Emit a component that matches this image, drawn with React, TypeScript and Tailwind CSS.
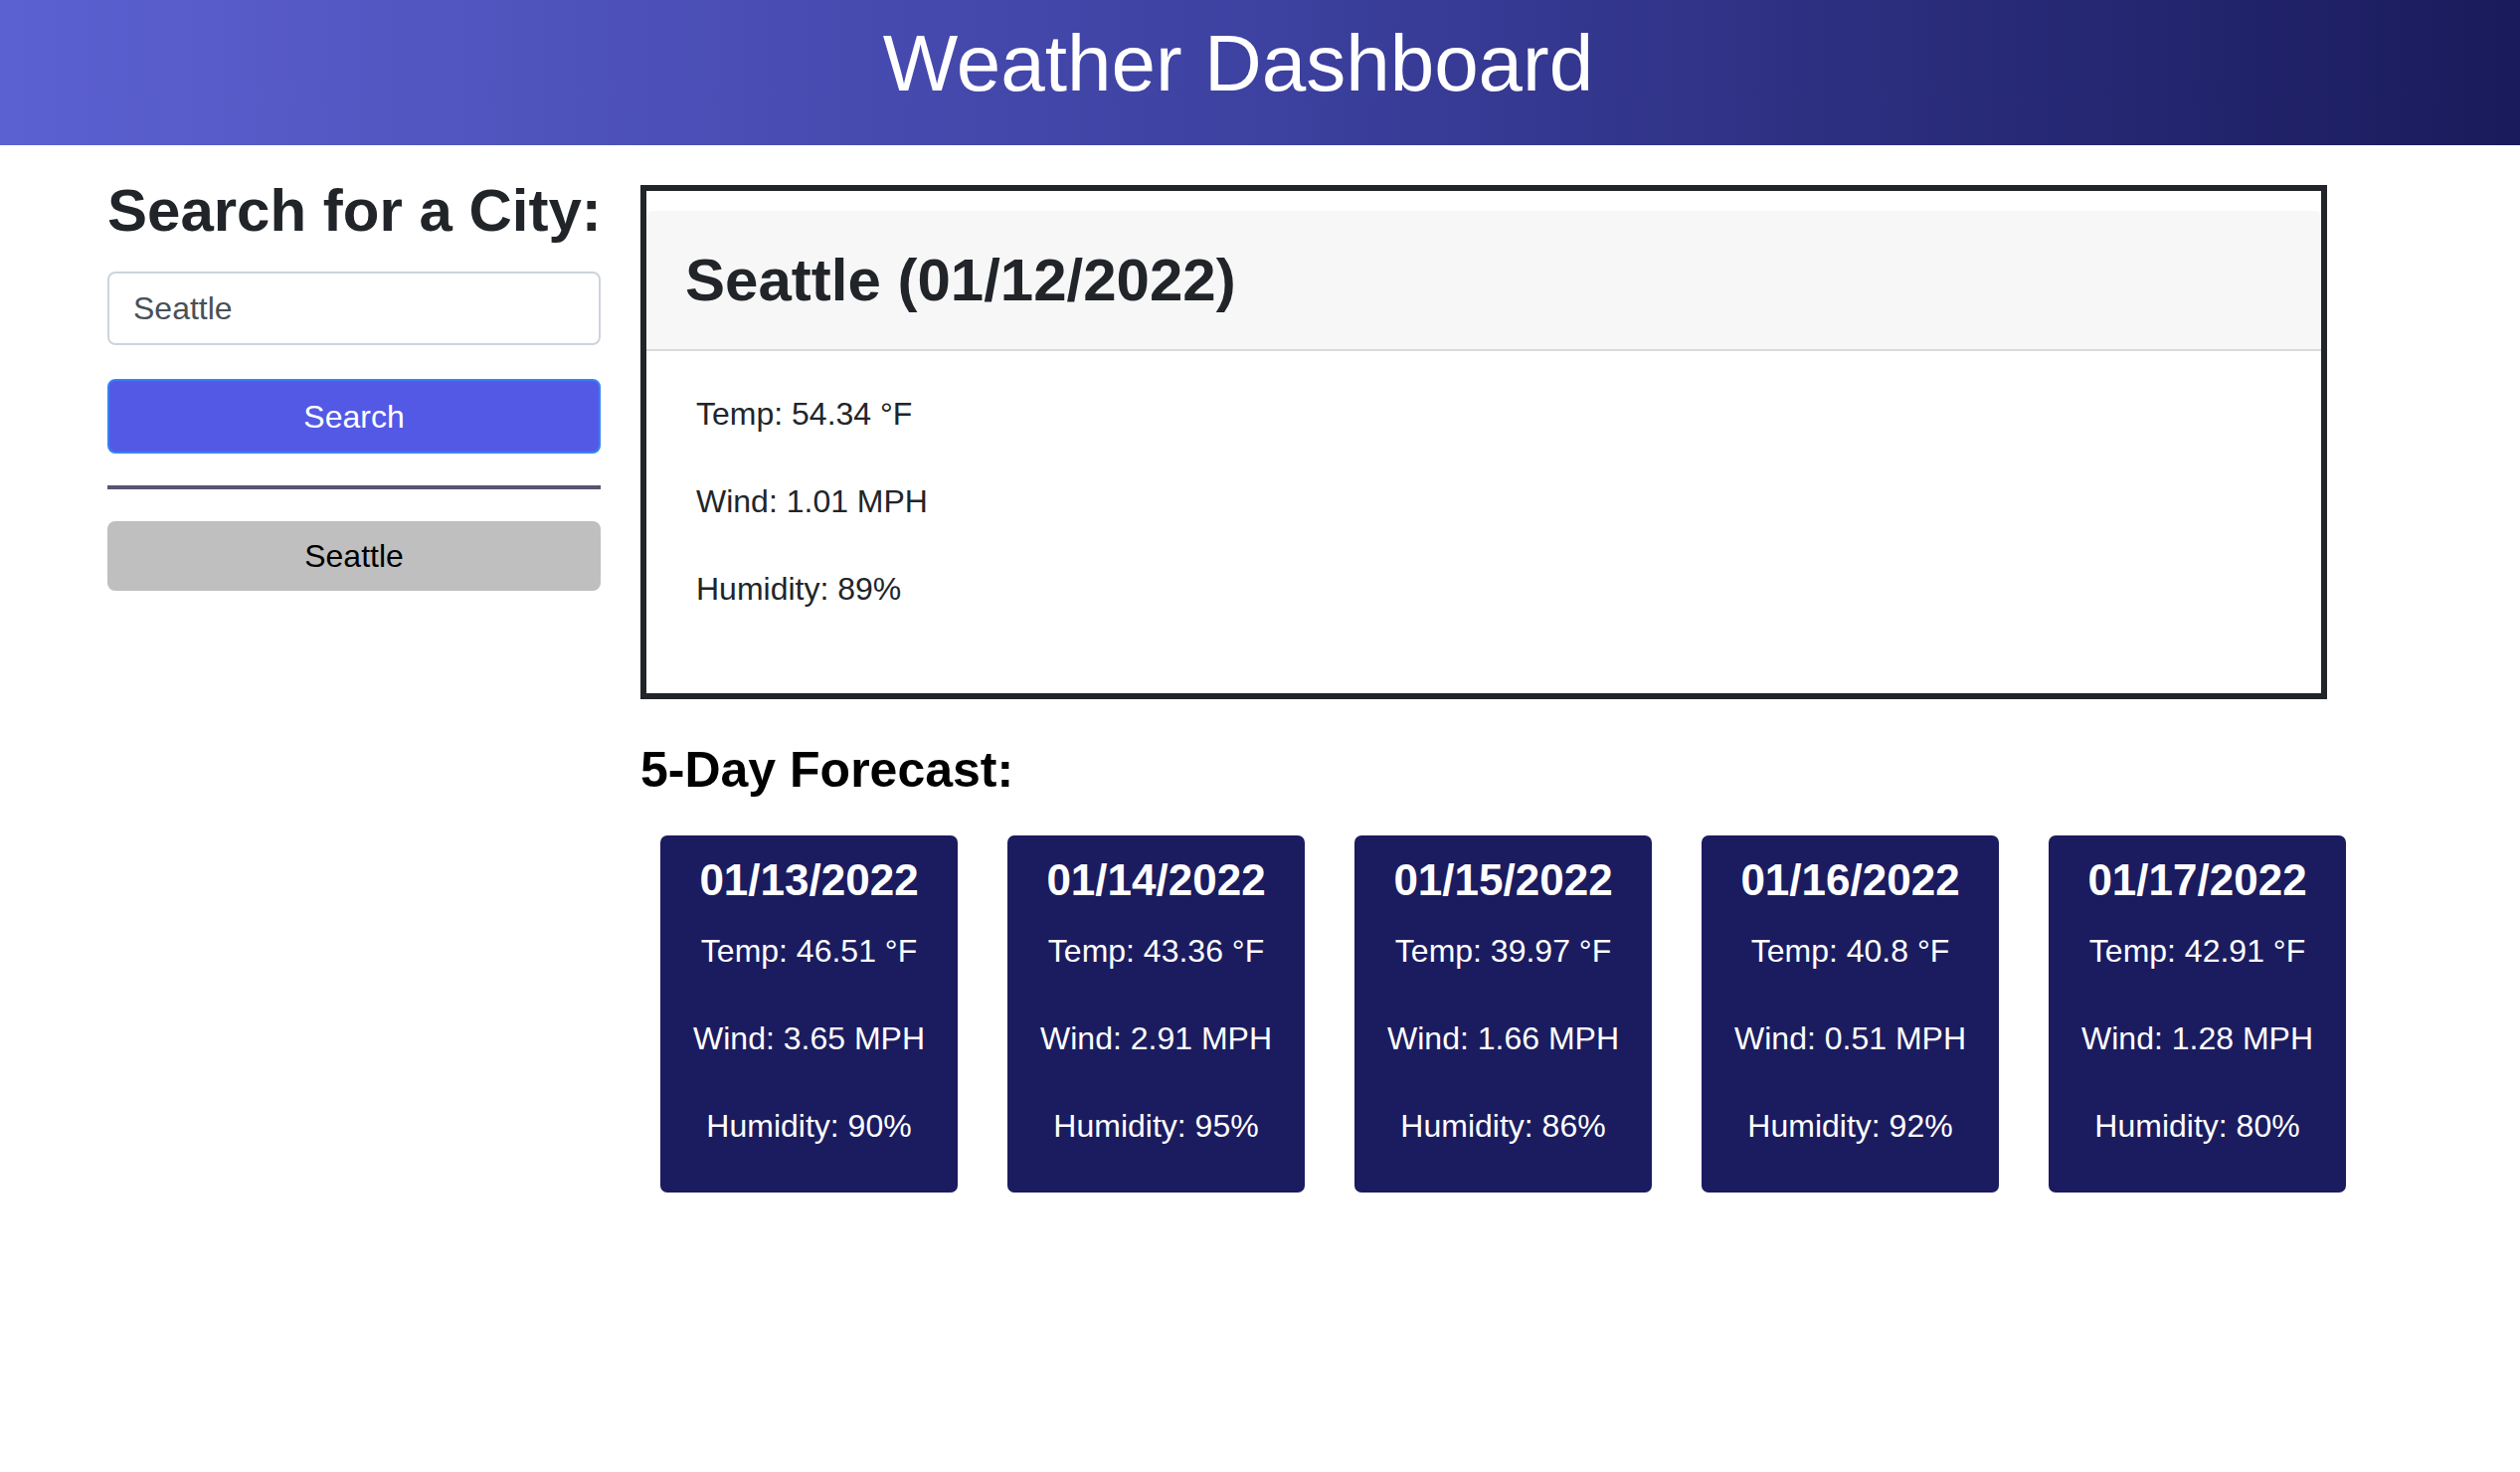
import { useState } from "react";

const forecast = [
  { date: "01/13/2022", temp: "46.51", wind: "3.65", humidity: "90" },
  { date: "01/14/2022", temp: "43.36", wind: "2.91", humidity: "95" },
  { date: "01/15/2022", temp: "39.97", wind: "1.66", humidity: "86" },
  { date: "01/16/2022", temp: "40.8", wind: "0.51", humidity: "92" },
  { date: "01/17/2022", temp: "42.91", wind: "1.28", humidity: "80" },
];

function ForecastCard({ date, temp, wind, humidity }: (typeof forecast)[number]) {
  return (
    <div className="w-[299px] h-[359px] shrink-0 rounded-[7px] bg-[#1b1c5f] pt-[19px] text-center text-white">
      <h3 className="text-[44px] font-bold leading-[1.2] mb-[21px]">{date}</h3>
      <p className="text-[32px] leading-[46px] mb-[42px]">Temp: {temp} °F</p>
      <p className="text-[32px] leading-[46px] mb-[42px]">Wind: {wind} MPH</p>
      <p className="text-[32px] leading-[46px]">Humidity: {humidity}%</p>
    </div>
  );
}

export default function App() {
  const [city, setCity] = useState("Seattle");

  return (
    <div className="min-h-screen bg-white font-['Liberation_Sans',Arial,sans-serif] text-[#212529]">
      <header className="h-[146px] bg-gradient-to-r from-[#5c61d2] via-[#3d41a0] to-[#1a1b5c] pt-[24px] pr-[44px] text-center">
        <h1 className="text-[80px] leading-none text-white">Weather Dashboard</h1>
      </header>

      <div className="flex items-start gap-[40px] pl-[108px]">
        {/* search column */}
        <aside className="w-[496px] shrink-0 pt-[30px] flex flex-col">
          <h2 className="text-[60px] font-bold leading-[1.2] whitespace-nowrap">Search for a City:</h2>
          <input
            value={city}
            onChange={(e) => setCity(e.target.value)}
            className="mt-[25px] h-[74px] w-full rounded-[8px] border-2 border-[#ced4da] bg-white px-[24px] pt-[4px] pb-[4px] text-[32px] text-[#495057] outline-none"
          />
          <button className="mt-[34px] h-[75px] w-full rounded-[8px] border-2 border-[#3683f5] bg-[#5359e5] text-[32px] text-white">
            Search
          </button>
          <div className="mt-[32px] h-[4px] w-full bg-[#585470]" />
          <button className="mt-[32px] h-[70px] w-full rounded-[8px] bg-[#bfbfbf] text-[32px] text-black">
            Seattle
          </button>
        </aside>

        {/* results column */}
        <main className="w-[1696px] shrink-0 pt-[40px]">
          <section className="border-[6px] border-[#212529] pt-[20px]">
            <div className="h-[141px] rounded-t-[6px] border-b-2 border-[#dadada] bg-[#f7f7f7] pt-[34px] pl-[39px]">
              <h2 className="text-[60px] font-bold leading-[1.2]">Seattle (01/12/2022)</h2>
            </div>
            <div className="pl-[50px] pt-[40px] pb-[40px] text-[32px] leading-[46px]">
              <p className="mb-[42px]">Temp: 54.34 °F</p>
              <p className="mb-[42px]">Wind: 1.01 MPH</p>
              <p className="mb-[42px]">Humidity: 89%</p>
            </div>
          </section>

          <h2 className="mt-[41px] text-[50px] font-bold leading-[1.2] text-black">5-Day Forecast:</h2>
          <div className="mt-[36px] flex gap-[50px] pl-[20px]">
            {forecast.map((day) => (
              <ForecastCard key={day.date} {...day} />
            ))}
          </div>
        </main>
      </div>
    </div>
  );
}
